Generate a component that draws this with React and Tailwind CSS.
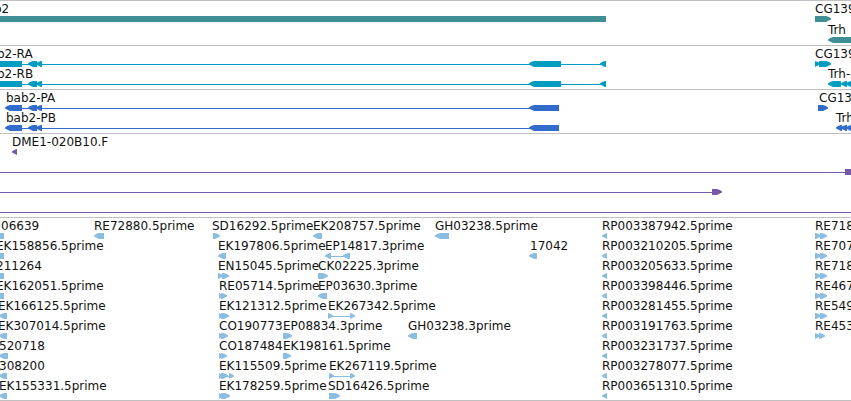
const TEAL = '#3f8f94';
const CYAN = '#009dc0';
const BLUE = '#316ccc';
const PURPLE = '#7759a9';
const SKY = '#8abde0';

// Glyph kinds: 'l' arrow pointing left, 'r' arrow pointing right,
// 'b' plain block, 'n' thin intron line. Coordinates are pixels from the left.
const tracks = [
  {
    name: 'Genes',
    color: TEAL,
    rows: [
      { tall: true, labels: [[-21, 'bab2'], [815, 'CG13908']], glyphs: [['b', 0, 606], ['r', 815, 831]] },
      { labels: [[828, 'Trh']], glyphs: [['l', 828, 900]] },
    ],
  },
  {
    name: 'Transcripts',
    color: CYAN,
    rows: [
      {
        labels: [[-18, 'bab2-RA'], [815, 'CG13908-RA']],
        glyphs: [['b', 0, 22], ['n', 22, 606], ['l', 28, 37], ['l', 36, 42], ['l', 529, 561], ['l', 600, 606], ['r', 815, 820], ['r', 819, 831]],
      },
      {
        labels: [[-18, 'bab2-RB'], [828, 'Trh-RA']],
        glyphs: [['b', 0, 22], ['n', 22, 606], ['l', 28, 37], ['l', 36, 42], ['l', 529, 561], ['l', 600, 606], ['l', 828, 841], ['l', 841, 847], ['l', 846, 852]],
      },
    ],
  },
  {
    name: 'Proteins',
    color: BLUE,
    rows: [
      {
        labels: [[6, 'bab2-PA'], [819, 'CG13908-PA']],
        glyphs: [['l', 5, 22], ['n', 22, 530], ['l', 28, 37], ['l', 36, 42], ['l', 529, 559], ['r', 818, 828]],
      },
      {
        labels: [[6, 'bab2-PB'], [836, 'Trh-PA']],
        glyphs: [['l', 5, 22], ['n', 22, 530], ['l', 28, 37], ['l', 36, 42], ['l', 529, 559], ['l', 836, 842], ['l', 841, 847], ['l', 846, 852]],
      },
    ],
  },
  {
    name: 'Insertions',
    color: PURPLE,
    rows: [
      { labels: [[12, 'DME1-020B10.F']], glyphs: [['l', 12, 17]] },
      { labels: [], glyphs: [['n', 0, 845], ['b', 845, 900]] },
      { labels: [], glyphs: [['n', 0, 712], ['r', 712, 722]] },
      { labels: [], glyphs: [['n', 0, 4000]] },
    ],
  },
  {
    name: 'ESTs',
    color: SKY,
    last: true,
    rows: [
      {
        labels: [[1, '06639'], [94, 'RE72880.5prime'], [212, 'SD16292.5prime'], [313, 'EK208757.5prime'], [435, 'GH03238.5prime'], [602, 'RP003387942.5prime'], [815, 'RE71854.5prime']],
        glyphs: [['b', 0, 4], ['l', 94, 104], ['r', 213, 220], ['l', 313, 322], ['l', 435, 449], ['l', 602, 607], ['r', 815, 821], ['r', 820, 827]],
      },
      {
        labels: [[-4, 'EK158856.5prime'], [218, 'EK197806.5prime'], [325, 'EP14817.3prime'], [530, '17042'], [602, 'RP003210205.5prime'], [815, 'RE70729.5prime']],
        glyphs: [['b', 0, 4], ['l', 218, 226], ['l', 325, 331], ['n', 330, 345], ['l', 343, 350], ['l', 529, 537], ['l', 602, 607], ['r', 815, 821], ['r', 820, 827]],
      },
      {
        labels: [[-4, '211264'], [218, 'EN15045.5prime'], [318, 'CK02225.3prime'], [602, 'RP003205633.5prime'], [815, 'RE71854.3prime']],
        glyphs: [['b', 0, 4], ['r', 218, 223], ['r', 222, 229], ['r', 318, 328], ['l', 602, 607], ['r', 815, 821], ['r', 820, 827]],
      },
      {
        labels: [[-4, 'EK162051.5prime'], [219, 'RE05714.5prime'], [318, 'EP03630.3prime'], [602, 'RP003398446.5prime'], [815, 'RE46718.5prime']],
        glyphs: [['b', 0, 4], ['r', 219, 223], ['r', 221, 227], ['l', 318, 327], ['l', 602, 607], ['r', 815, 821], ['r', 820, 827]],
      },
      {
        labels: [[-2, 'EK166125.5prime'], [219, 'EK121312.5prime'], [328, 'EK267342.5prime'], [602, 'RP003281455.5prime'], [815, 'RE54930.5prime']],
        glyphs: [['l', -1, 7], ['r', 219, 223], ['r', 221, 229], ['r', 328, 333], ['n', 332, 352], ['r', 350, 355], ['l', 602, 607], ['r', 815, 821], ['r', 820, 827]],
      },
      {
        labels: [[-2, 'EK307014.5prime'], [219, 'CO190773'], [283, 'EP08834.3prime'], [408, 'GH03238.3prime'], [602, 'RP003191763.5prime'], [815, 'RE45360.5prime']],
        glyphs: [['l', -1, 7], ['r', 219, 223], ['r', 221, 228], ['r', 283, 292], ['l', 408, 417], ['l', 602, 607], ['r', 815, 820], ['r', 819, 825]],
      },
      {
        labels: [[-1, '520718'], [219, 'CO187484'], [283, 'EK198161.5prime'], [602, 'RP003231737.5prime']],
        glyphs: [['l', -1, 8], ['r', 219, 223], ['r', 221, 227], ['r', 283, 291], ['l', 602, 607]],
      },
      {
        labels: [[-1, '308200'], [219, 'EK115509.5prime'], [329, 'EK267119.5prime'], [602, 'RP003278077.5prime']],
        glyphs: [['l', -1, 7], ['r', 219, 223], ['r', 221, 228], ['n', 226, 230], ['r', 229, 234], ['r', 329, 334], ['n', 333, 352], ['r', 350, 355], ['l', 602, 607]],
      },
      {
        labels: [[-1, 'EK155331.5prime'], [219, 'EK178259.5prime'], [328, 'SD16426.5prime'], [602, 'RP003651310.5prime']],
        glyphs: [['l', -1, 7], ['r', 219, 223], ['r', 221, 230], ['r', 329, 340], ['l', 602, 607]],
      },
    ],
  },
];

function Glyph({ kind, start, end }) {
  const tip = Math.min(5, end - start);
  if (kind === 'n') return <rect x={start} y="3" width={end - start} height="1" />;
  if (kind === 'b') return <rect x={start} y="0" width={end - start} height="6" />;
  if (kind === 'l') {
    return (
      <polygon
        points={`${start},2.5 ${start + 2},1 ${start + tip},0 ${end},0 ${end},6 ${start + tip},6 ${start + 2},4.5 ${start},3.5`}
      />
    );
  }
  return (
    <polygon
      points={`${end},2.5 ${end - 2},1 ${end - tip},0 ${start},0 ${start},6 ${end - tip},6 ${end - 2},4.5 ${end},3.5`}
    />
  );
}

function Row({ row, color }) {
  return (
    <div className={row.tall ? 'relative h-[21px]' : 'relative h-5'}>
      {row.labels.map(([x, text]) => (
        <span key={x} className="absolute top-0 whitespace-nowrap" style={{ left: x }}>
          {text}
        </span>
      ))}
      <svg className="absolute left-0 top-[15px] h-[6px] w-full" fill={color} aria-hidden="true">
        {row.glyphs.map(([kind, start, end]) => (
          <Glyph key={`${kind}${start}`} kind={kind} start={start} end={end} />
        ))}
      </svg>
    </div>
  );
}

export default function App() {
  return (
    <main className="w-full overflow-hidden border-t border-[#c0c0c0] bg-white font-['DejaVu_Sans',sans-serif] text-[12px] leading-[17px] text-[#111111]">
      {tracks.map((track) => (
        <section
          key={track.name}
          aria-label={track.name}
          className={`border-b border-[#c0c0c0] ${track.last ? 'pb-[2px]' : 'pb-[3px]'}`}
        >
          {track.rows.map((row, i) => (
            <Row key={i} row={row} color={track.color} />
          ))}
        </section>
      ))}
    </main>
  );
}
